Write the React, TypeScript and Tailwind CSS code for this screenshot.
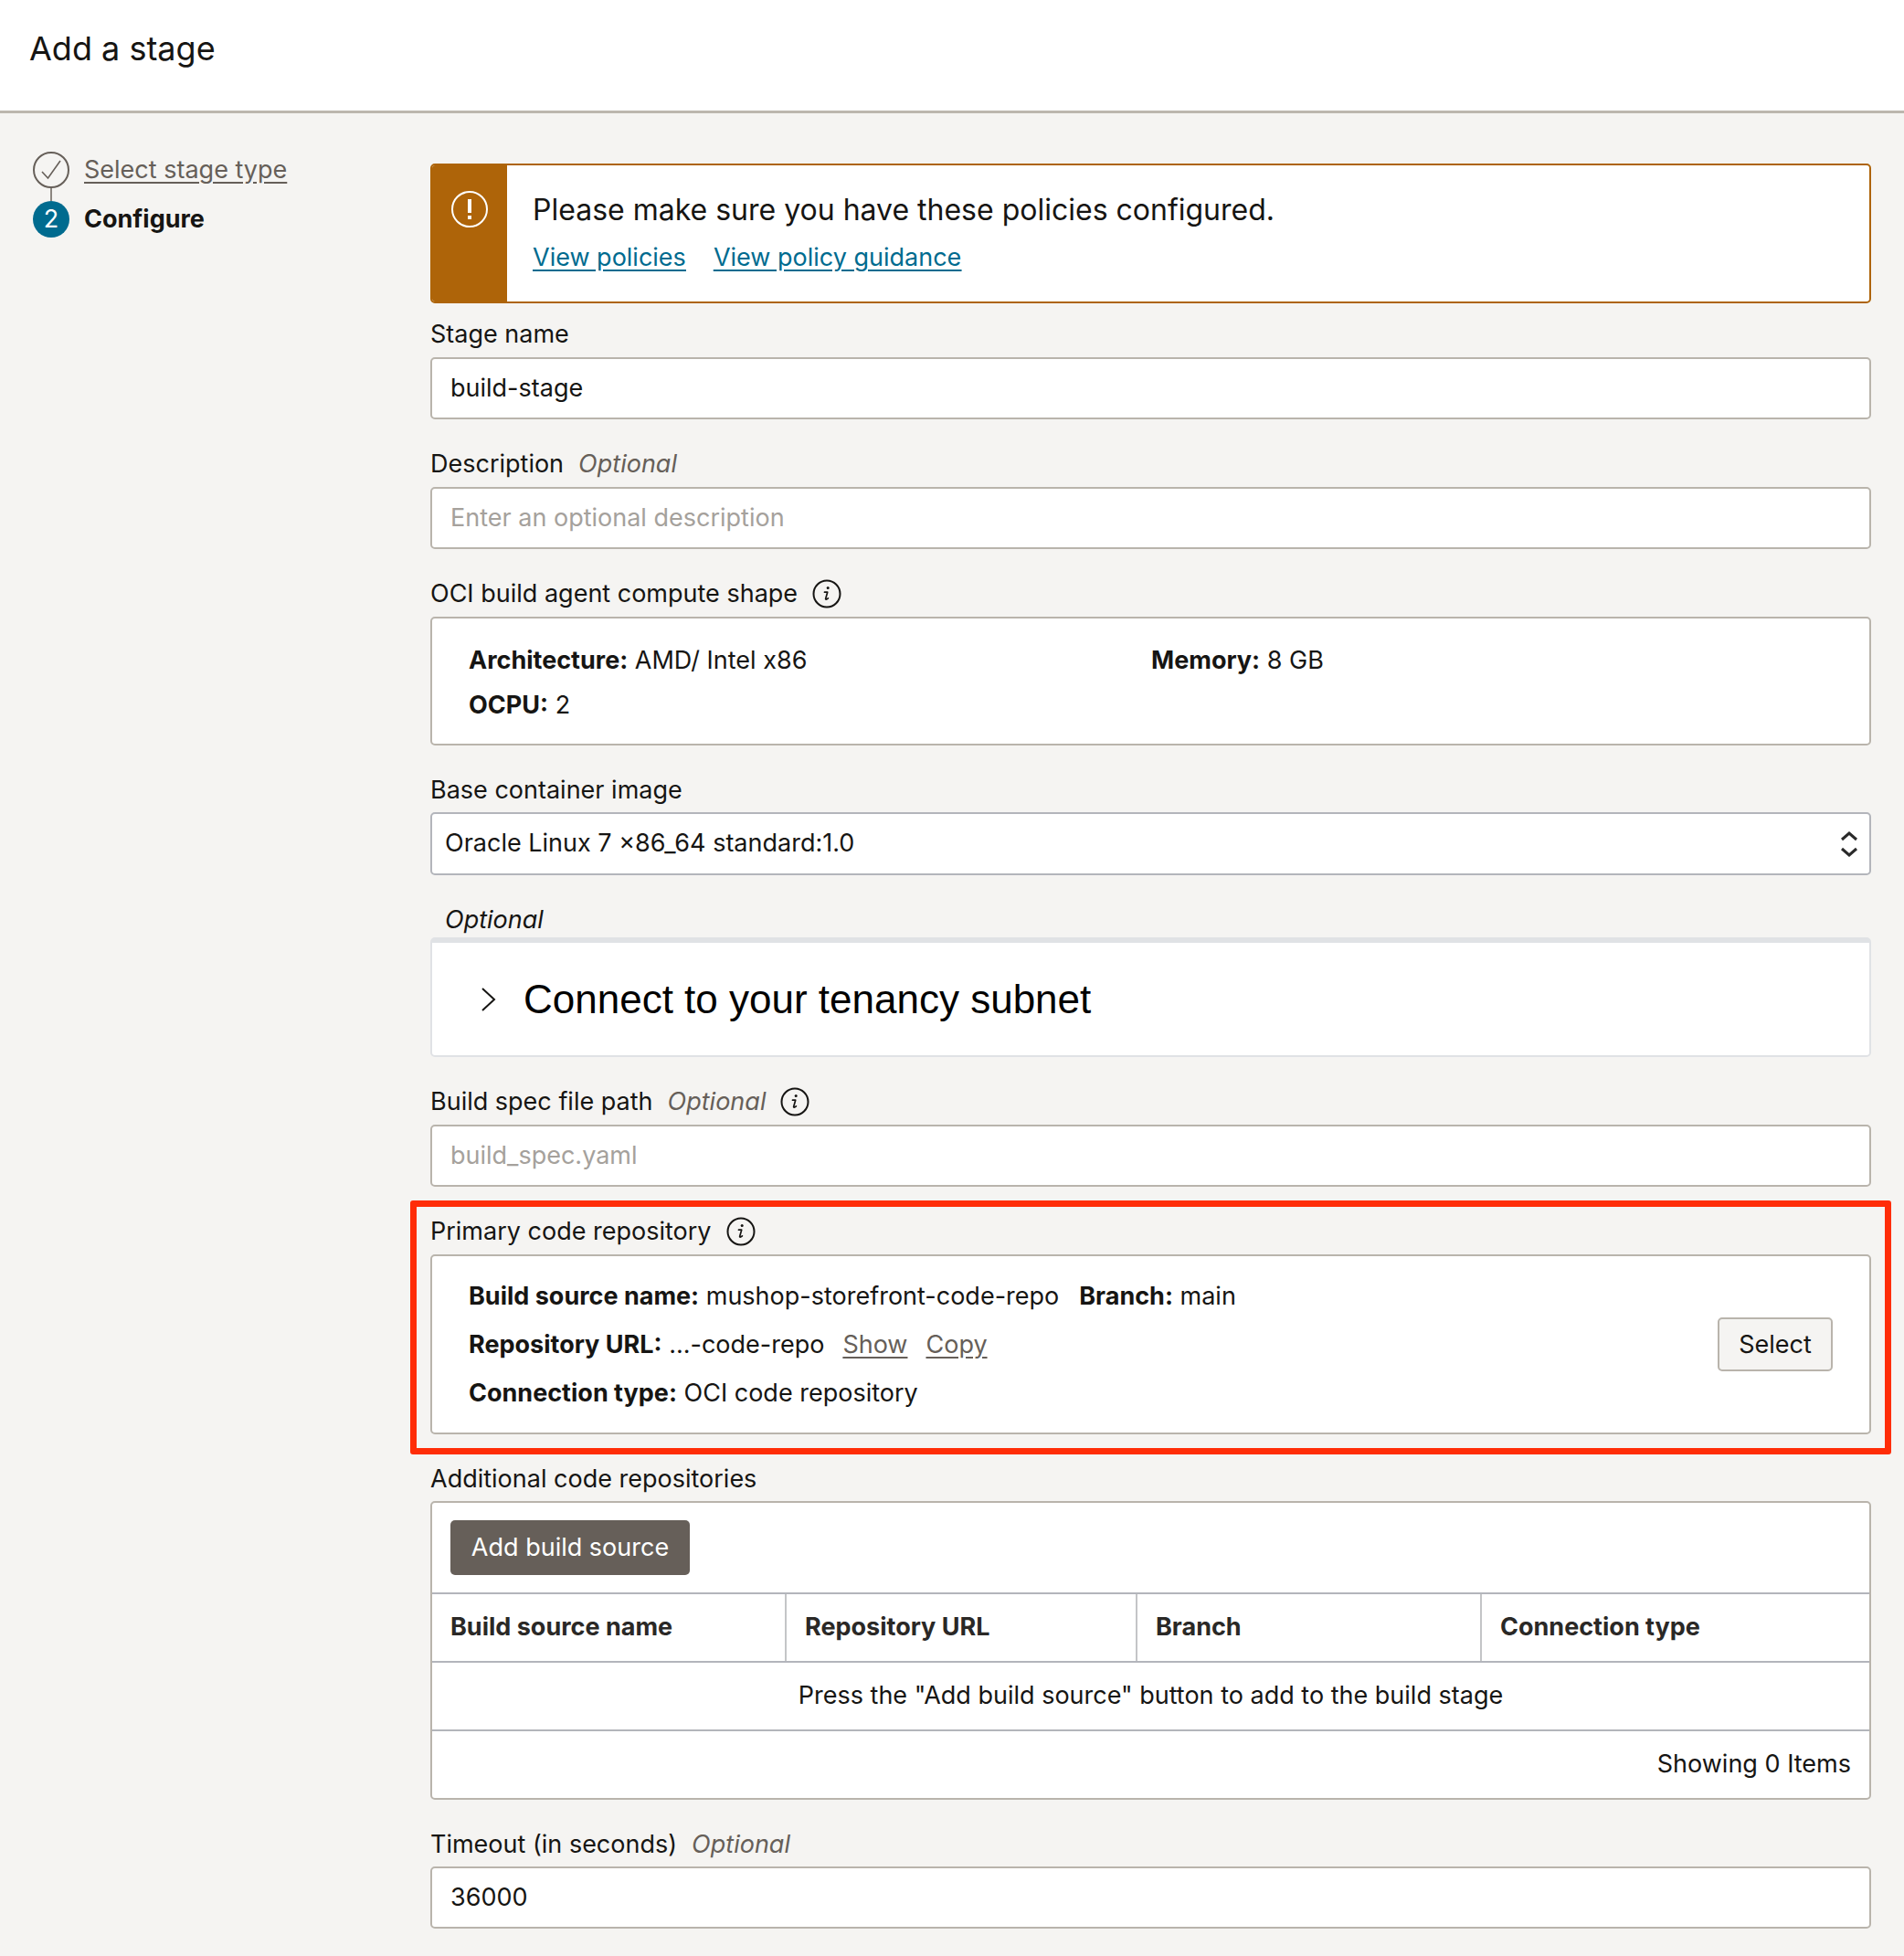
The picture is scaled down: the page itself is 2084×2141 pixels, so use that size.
import React from "react";

const labelClass = "flex h-[34px] items-center text-[27px] text-[#161513]";
const inputClass =
  "flex h-[68px] items-center rounded-[5px] border-2 border-[#b9b4ac] bg-white px-[20px] text-[27px]";

const InfoIcon: React.FC = () => (
  <svg width="32" height="32" viewBox="0 0 32 32" fill="none" className="ml-[16px]">
    <circle cx="16" cy="16" r="14.5" stroke="#161513" strokeWidth="2" />
    <circle cx="17.2" cy="9.6" r="1.5" fill="#161513" />
    <path d="M13.5 14.2h3.2l-2 7c-.3 1.2.8 1.4 2.7-.3" stroke="#161513" strokeWidth="1.7" strokeLinecap="round" strokeLinejoin="round" />
  </svg>
);

const Optional: React.FC = () => <span className="ml-[16px] italic text-[#665f59]">Optional</span>;

const TextField: React.FC<{ value: string; placeholder?: boolean }> = ({ value, placeholder }) => (
  <div className={`${inputClass} ${placeholder ? "text-[#a5a19c]" : "text-[#161513]"}`}>{value}</div>
);

export default function App() {
  return (
    <div className="min-h-[2141px] bg-[#f5f4f2] font-['Inter',sans-serif] text-[#161513]">
      <header className="flex h-[124px] items-start border-b-[3px] border-[#bcb7ae] bg-white pl-[32px] pt-[30px]">
        <h1 className="text-[36px] leading-[46px] text-[#161513]">Add a stage</h1>
      </header>

      <div className="flex pr-[36px]">
        <aside className="w-[471px] shrink-0 pl-[36px] pt-[42px]">
          <div className="flex h-[40px] items-center">
            <svg width="40" height="40" viewBox="0 0 40 40" fill="none">
              <circle cx="20" cy="20" r="19" stroke="#665f59" strokeWidth="2" />
              <path d="M10 22l6.5 7L30 10" stroke="#665f59" strokeWidth="1.6" />
            </svg>
            <a className="ml-[16px] text-[27px] text-[#665f59] underline underline-offset-[4px]">Select stage type</a>
          </div>
          <div className="ml-[19px] h-[14px] w-[2px] bg-[#8c8680]" />
          <div className="flex h-[40px] items-center">
            <span className="flex h-[40px] w-[40px] items-center justify-center rounded-full bg-[#006b8f] text-[27px] text-white">2</span>
            <span className="ml-[16px] text-[27px] font-bold">Configure</span>
          </div>
        </aside>

        <main className="min-w-0 flex-1 pt-[55px]">
          <div className="flex h-[153px] overflow-hidden rounded-[5px] border-2 border-[#ae6409] bg-white">
            <div className="flex w-[82px] shrink-0 justify-center bg-[#ae6409] pt-[28px]">
              <svg width="40" height="40" viewBox="0 0 40 40" fill="none">
                <circle cx="20" cy="20" r="19" stroke="white" strokeWidth="2" />
                <path d="M20 9v15" stroke="white" strokeWidth="4" />
                <rect x="18" y="27" width="4" height="4" fill="white" />
              </svg>
            </div>
            <div className="pl-[28px] pt-[27px]">
              <p className="text-[32px] leading-[44px]">Please make sure you have these policies configured.</p>
              <p className="mt-[10px] flex gap-[30px] text-[27px] leading-[40px] text-[#006b8f] underline underline-offset-[4px]">
                <a>View policies</a>
                <a>View policy guidance</a>
              </p>
            </div>
          </div>

          <div className="mt-[17px] flex flex-col gap-[32px]">
            <section>
              <label className={`${labelClass} mb-[8px]`}>Stage name</label>
              <TextField value="build-stage" />
            </section>

            <section>
              <label className={`${labelClass} mb-[8px]`}>
                Description <Optional />
              </label>
              <TextField value="Enter an optional description" placeholder />
            </section>

            <section>
              <label className={`${labelClass} mb-[8px]`}>
                OCI build agent compute shape <InfoIcon />
              </label>
              <div className="grid h-[141px] grid-cols-[747px_1fr] content-start gap-y-[15px] rounded-[5px] border-2 border-[#b9b4ac] bg-white pl-[40px] pt-[29px] text-[27px] leading-[34px]">
                <div><b>Architecture:</b> AMD/ Intel x86</div>
                <div><b>Memory:</b> 8 GB</div>
                <div><b>OCPU:</b> 2</div>
              </div>
            </section>

            <section>
              <label className={`${labelClass} mb-[7px]`}>Base container image</label>
              <div className="flex h-[69px] items-center justify-between rounded-[5px] border-2 border-[#b3b5bb] bg-white pl-[14px] pr-[12px] text-[27px]">
                Oracle Linux 7 x86_64 standard:1.0
                <svg width="20" height="32" viewBox="0 0 20 32" fill="none" stroke="#2a2a2a" strokeWidth="3">
                  <path d="M2 11l8-7 8 7" />
                  <path d="M2 21l8 7 8-7" />
                </svg>
              </div>
            </section>

            <section>
              <label className={`${labelClass} mb-[2px] pl-[16px] italic text-[#665f59]`}>Optional</label>
              <div className="flex h-[131px] items-center rounded-[5px] border-2 border-t-[6px] border-[#e0e2e5] bg-white pl-[52px]">
                <svg width="20" height="28" viewBox="0 0 20 28" fill="none" stroke="#161513" strokeWidth="2">
                  <path d="M3 2l13 12L3 26" />
                </svg>
                <span className="ml-[28px] font-['Liberation_Sans',sans-serif] text-[44px] text-black">Connect to your tenancy subnet</span>
              </div>
            </section>

            <section>
              <label className={`${labelClass} mb-[8px]`}>
                Build spec file path <Optional /> <InfoIcon />
              </label>
              <TextField value="build_spec.yaml" placeholder />
            </section>

            <section className="relative">
              <div className="absolute -inset-x-[22px] -bottom-[22px] -top-[17px] rounded-[3px] border-[7px] border-[#ff2d08]" />
              <label className={`${labelClass} mb-[8px]`}>
                Primary code repository <InfoIcon />
              </label>
              <div className="flex h-[197px] items-center justify-between rounded-[5px] border-2 border-[#b9b4ac] bg-white pl-[40px] pr-[40px] text-[27px] leading-[34px]">
                <div className="flex flex-col gap-[19px]">
                  <div className="flex gap-[22px]">
                    <span><b>Build source name:</b> mushop-storefront-code-repo</span>
                    <span><b>Branch:</b> main</span>
                  </div>
                  <div className="flex gap-[20px]">
                    <span><b>Repository URL:</b> ...-code-repo</span>
                    <a className="text-[#665f59] underline underline-offset-[4px]">Show</a>
                    <a className="text-[#665f59] underline underline-offset-[4px]">Copy</a>
                  </div>
                  <div><b>Connection type:</b> OCI code repository</div>
                </div>
                <button className="h-[59px] w-[126px] rounded-[5px] border-2 border-[#b9b4ac] bg-[#f5f4f2]">Select</button>
              </div>
            </section>

            <section>
              <label className={`${labelClass} mb-[7px]`}>Additional code repositories</label>
              <div className="rounded-[5px] border-2 border-[#b9b4ac] bg-white text-[27px]">
                <div className="h-[100px] border-b-2 border-[#b3b5bb] pl-[20px] pt-[19px]">
                  <button className="h-[60px] w-[262px] rounded-[5px] bg-[#665f59] text-white">Add build source</button>
                </div>
                <div className="grid h-[75px] grid-cols-[388px_384px_377px_1fr] border-b-2 border-[#b3b5bb] font-bold text-[#2a2826]">
                  <div className="flex items-center border-r-2 border-[#c4c5c7] pl-[20px]">Build source name</div>
                  <div className="flex items-center border-r-2 border-[#c4c5c7] pl-[20px]">Repository URL</div>
                  <div className="flex items-center border-r-2 border-[#c4c5c7] pl-[20px]">Branch</div>
                  <div className="flex items-center pl-[20px]">Connection type</div>
                </div>
                <div className="flex h-[75px] items-center justify-center border-b-2 border-[#b3b5bb]">
                  Press the "Add build source" button to add to the build stage
                </div>
                <div className="flex h-[73px] items-center justify-end pr-[20px]">Showing 0 Items</div>
              </div>
            </section>

            <section>
              <label className={`${labelClass} mb-[7px]`}>
                Timeout (in seconds) <Optional />
              </label>
              <TextField value="36000" />
            </section>
          </div>
        </main>
      </div>
    </div>
  );
}
